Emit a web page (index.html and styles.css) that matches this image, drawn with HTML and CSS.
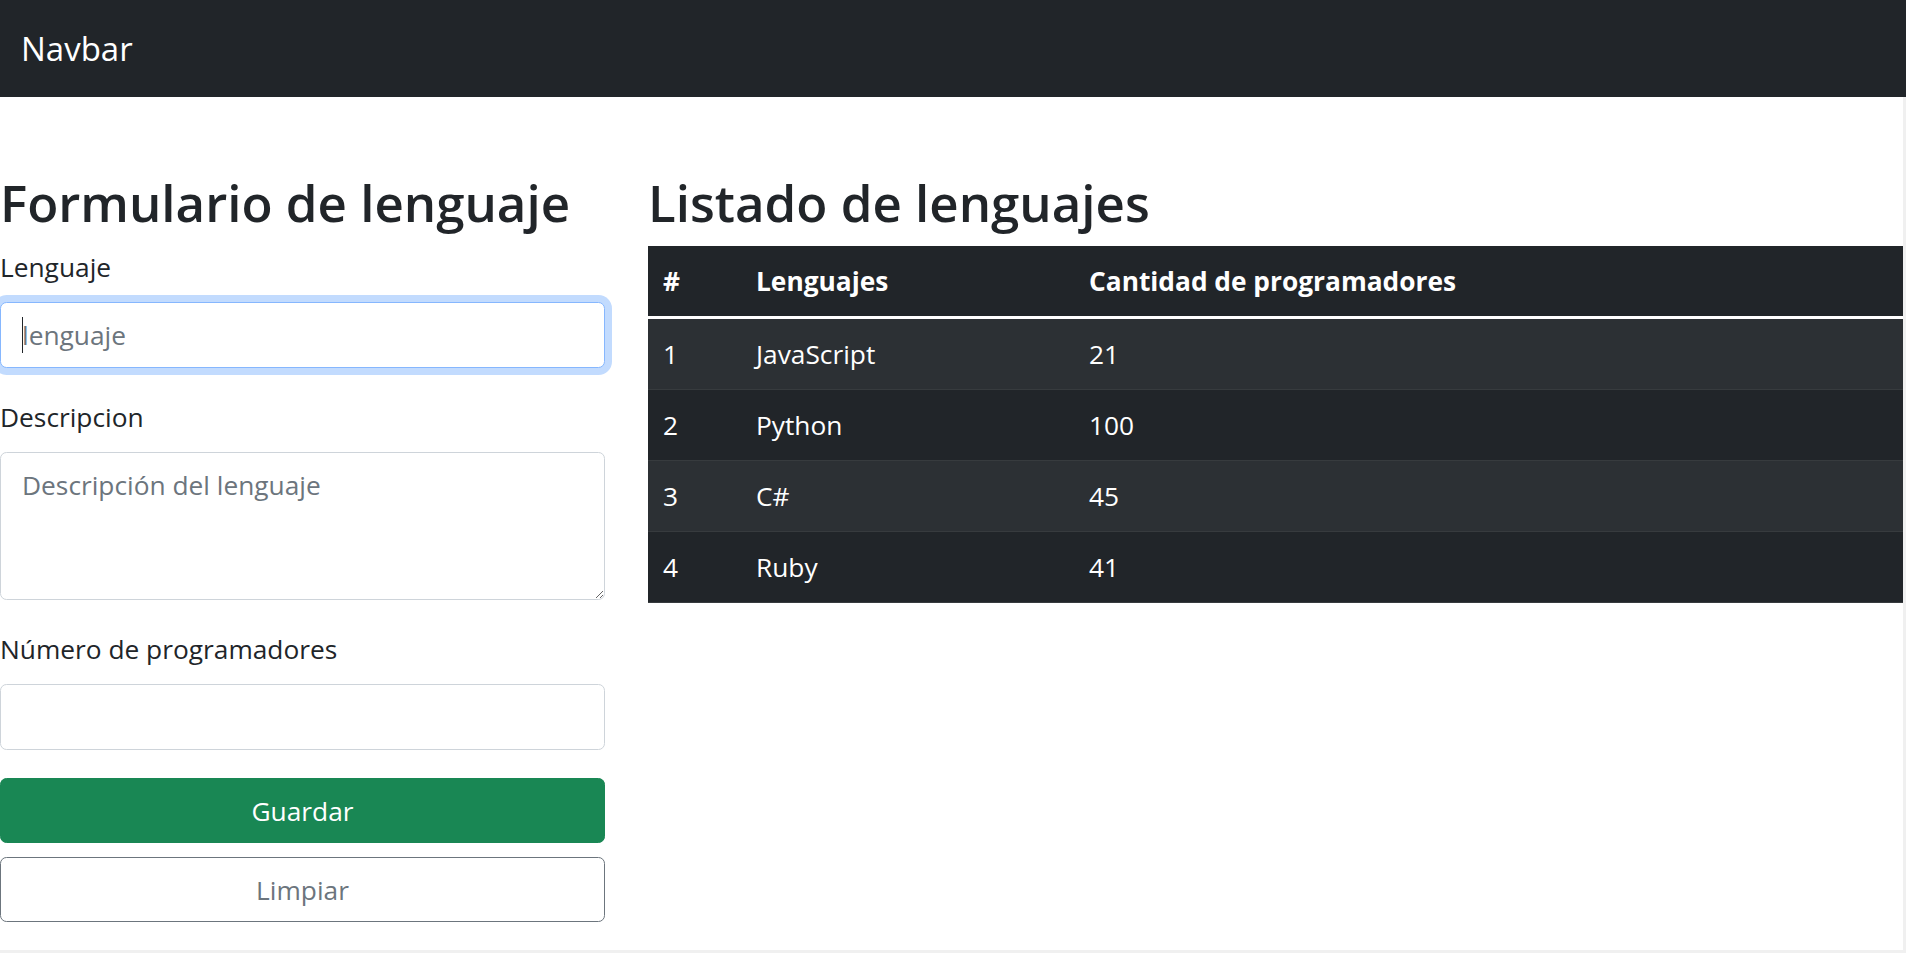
FILE: index.html
```html
<!DOCTYPE html>
<html lang="es">
<head>
<meta charset="utf-8">
<title>Lenguajes</title>
<link rel="stylesheet" href="styles.css">
</head>
<body>
<nav class="navbar">
  <span class="brand">Navbar</span>
</nav>
<main class="page">
  <section class="form-col">
    <h1 class="title">Formulario de lenguaje</h1>
    <form class="form">
      <div class="field">
        <label class="label" for="lenguaje">Lenguaje</label>
        <div class="control-wrap">
          <input class="control focused" id="lenguaje" type="text" placeholder="lenguaje">
          <span class="caret"></span>
        </div>
      </div>
      <div class="field">
        <label class="label" for="descripcion">Descripcion</label>
        <textarea class="control area" id="descripcion" rows="3" placeholder="Descripción del lenguaje"></textarea>
      </div>
      <div class="field">
        <label class="label" for="numero">Número de programadores</label>
        <input class="control" id="numero" type="number">
      </div>
      <button class="btn btn-save" type="button">Guardar</button>
      <button class="btn btn-clear" type="button">Limpiar</button>
    </form>
  </section>
  <section class="list-col">
    <h1 class="title">Listado de lenguajes</h1>
    <table class="table">
      <thead>
        <tr>
          <th class="c-num">#</th>
          <th class="c-name">Lenguajes</th>
          <th>Cantidad de programadores</th>
        </tr>
      </thead>
      <tbody>
        <tr><td>1</td><td>JavaScript</td><td>21</td></tr>
        <tr><td>2</td><td>Python</td><td>100</td></tr>
        <tr><td>3</td><td>C#</td><td>45</td></tr>
        <tr><td>4</td><td>Ruby</td><td>41</td></tr>
      </tbody>
    </table>
  </section>
</main>
</body>
</html>
```

FILE: styles.css
```css
* {
  box-sizing: border-box;
}

html, body {
  margin: 0;
  height: 100%;
}

body {
  background: #f0f0f0;
  font-family: "Open Sans", "Noto Sans", sans-serif;
  font-size: 26.3px;
  line-height: 42px;
  color: #212529;
}

.navbar {
  height: 97px;
  background: #212529;
  display: flex;
  align-items: center;
  padding-left: 21px;
}

.brand {
  color: #ffffff;
  font-size: 33px;
  line-height: 1;
}

.page {
  background: #ffffff;
  margin-right: 3px;
  height: 853px;
  display: flex;
  align-items: flex-start;
  gap: 43px;
  padding-top: 74px;
}

.form-col {
  width: 605px;
  flex: none;
}

.list-col {
  flex: 1;
  min-width: 0;
}

.title {
  font-size: 51px;
  font-weight: 600;
  line-height: 63px;
  margin: 0 0 12px;
}

.form {
  display: flex;
  flex-direction: column;
}

.field {
  margin-bottom: 28px;
}

.label {
  display: block;
  margin-bottom: 14px;
}

.control-wrap {
  position: relative;
}

.caret {
  position: absolute;
  left: 22px;
  top: 15px;
  width: 1px;
  height: 36px;
  background: #212529;
}

.control {
  display: block;
  width: 100%;
  height: 66px;
  padding: 10.5px 21px;
  font: inherit;
  line-height: 42px;
  color: #212529;
  background: #ffffff;
  border: 1px solid #ced4da;
  border-radius: 6.5px;
  outline: none;
}

.control::placeholder {
  color: #6c757d;
}

.control.focused {
  border-color: #86b7fe;
  box-shadow: 0 0 0 7px #c2dbfe;
}

.area {
  height: 148px;
  resize: vertical;
}

.btn {
  display: block;
  width: 100%;
  height: 65px;
  font: inherit;
  line-height: 42px;
  border-radius: 6.5px;
  text-align: center;
  padding: 0;
}

.btn-save {
  background: #198754;
  border: 1px solid #198754;
  color: #ffffff;
  margin-bottom: 14px;
}

.btn-clear {
  background: #ffffff;
  border: 1px solid #6c757d;
  color: #6c757d;
}

.table {
  width: 100%;
  border-collapse: collapse;
  background: #212529;
  color: #ffffff;
}

.table th,
.table td {
  text-align: left;
  padding: 14px 15px;
  line-height: 42px;
}

.table th {
  font-weight: 700;
  border-bottom: 3px solid #ffffff;
}

.table td {
  border-bottom: 1px solid #373b3e;
}

.table tbody tr:nth-child(odd) td {
  background: #2c3034;
}

.c-num {
  width: 93px;
}

.c-name {
  width: 333px;
}
```
